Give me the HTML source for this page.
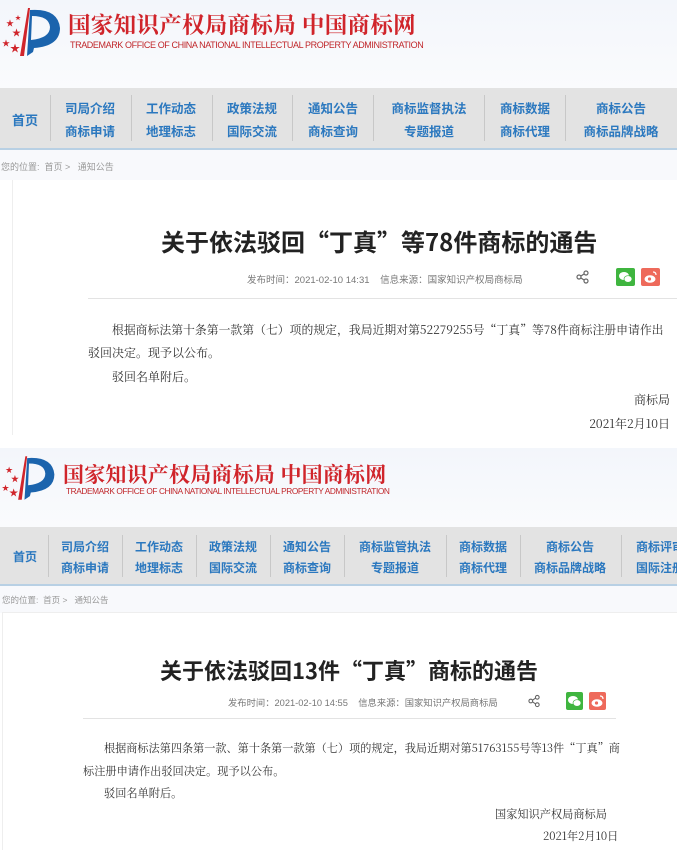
<!DOCTYPE html>
<html><head><meta charset="utf-8"><style>
*{margin:0;padding:0;box-sizing:border-box}
body{width:677px;height:850px;overflow:hidden;background:#fff;position:relative;font-family:"Liberation Sans","Noto Sans CJK SC",sans-serif}
.a{position:absolute;white-space:nowrap}
.hdr{background:linear-gradient(#f3f6fb,#fafbfd);}
.nav{background:#e3e3e3;border-bottom:2px solid #b8d0e4}
.n{position:absolute;color:#2b78bf;font-weight:bold;text-align:center;transform:translateX(-50%);white-space:nowrap}
.sep{position:absolute;width:1px;background:#c8c8c8}
.logo{font-family:"Noto Serif CJK SC","Liberation Serif",serif;color:#d0252b;font-weight:bold}
.en{color:#c0262a;font-size:9px;letter-spacing:-0.4px;transform-origin:left}
.crumb{color:#999;font-size:9px}
.title{font-weight:bold;color:#222;font-family:"Noto Sans CJK SC",sans-serif}
.meta{color:#777;font-size:9.5px;transform-origin:left}
.body{font-family:"Noto Serif CJK SC","Liberation Serif",serif;color:#333;font-size:12px}
.wx{position:absolute;background:#3fb53f;border-radius:2px}
.wb{position:absolute;background:#ee6a5b;border-radius:2px}
</style></head><body>

<!-- PANEL 1 -->
<div class="a hdr" style="left:0;top:0;width:677px;height:88px"></div>
<svg class="a" style="left:0;top:6px" width="64" height="52" viewBox="0 0 64 52">
<polygon points="28,2 30,2 24,50 20,50" fill="#d0252b"/>
<path d="M30 4 Q58 2 60 22 Q60 40 34 42 L33 46 L27 50 L30 4 Z M32 10 L31 34 Q50 32 50 21 Q49 10 32 10 Z" fill="#1b64ad"/>
<text x="6" y="20" fill="#d0252b" font-size="8">★</text><text x="12" y="30" fill="#d0252b" font-size="9">★</text>
<text x="2" y="40" fill="#d0252b" font-size="8">★</text><text x="10" y="46" fill="#d0252b" font-size="10">★</text>
<text x="15" y="14" fill="#d0252b" font-size="6">★</text>
</svg>
<div class="a logo" style="left:68px;top:8px;font-size:22.5px;letter-spacing:0.3px">国家知识产权局商标局 中国商标网</div>
<div class="a en" style="left:70px;top:40px">TRADEMARK OFFICE OF CHINA NATIONAL INTELLECTUAL PROPERTY ADMINISTRATION</div>

<div class="a nav" style="left:0;top:88px;width:677px;height:62px"></div>
<div class="n" style="left:25px;top:110px;font-size:13px">首页</div>
<div class="sep" style="left:50px;top:95px;height:46px"></div>
<div class="sep" style="left:131px;top:95px;height:46px"></div>
<div class="sep" style="left:212px;top:95px;height:46px"></div>
<div class="sep" style="left:292px;top:95px;height:46px"></div>
<div class="sep" style="left:373px;top:95px;height:46px"></div>
<div class="sep" style="left:484px;top:95px;height:46px"></div>
<div class="sep" style="left:565px;top:95px;height:46px"></div>
<div class="n" style="left:90px;top:98px;font-size:12.5px">司局介绍</div><div class="n" style="left:90px;top:121px;font-size:12.5px">商标申请</div>
<div class="n" style="left:171px;top:98px;font-size:12.5px">工作动态</div><div class="n" style="left:171px;top:121px;font-size:12.5px">地理标志</div>
<div class="n" style="left:252px;top:98px;font-size:12.5px">政策法规</div><div class="n" style="left:252px;top:121px;font-size:12.5px">国际交流</div>
<div class="n" style="left:333px;top:98px;font-size:12.5px">通知公告</div><div class="n" style="left:333px;top:121px;font-size:12.5px">商标查询</div>
<div class="n" style="left:429px;top:98px;font-size:12.5px">商标监督执法</div><div class="n" style="left:429px;top:121px;font-size:12.5px">专题报道</div>
<div class="n" style="left:525px;top:98px;font-size:12.5px">商标数据</div><div class="n" style="left:525px;top:121px;font-size:12.5px">商标代理</div>
<div class="n" style="left:621px;top:98px;font-size:12.5px">商标公告</div><div class="n" style="left:621px;top:121px;font-size:12.5px">商标品牌战略</div>

<div class="a" style="left:0;top:150px;width:677px;height:30px;background:#f8f9fc"></div>
<div class="a crumb" style="left:1px;top:160px">您的位置:&nbsp; 首页 &gt;&nbsp;&nbsp; 通知公告</div>
<div class="a" style="left:12px;top:180px;width:1px;height:255px;background:#eee"></div>

<div class="a title" style="left:161px;top:225px;font-size:24px;line-height:32px">关于依法驳回“丁真”等78件商标的通告</div>
<div class="a meta" style="left:247px;top:272px">发布时间：2021-02-10 14:31&nbsp;&nbsp;&nbsp; 信息来源：国家知识产权局商标局</div>
<svg class="a" style="left:576px;top:270px" width="14" height="14" viewBox="0 0 14 14" fill="none" stroke="#666" stroke-width="1.2"><circle cx="10" cy="3" r="2"/><circle cx="3" cy="7" r="2"/><circle cx="10" cy="11" r="2"/><path d="M5 6L8 4M5 8L8 10"/></svg>
<div class="wx" style="left:616px;top:268px;width:19px;height:18px"></div>
<svg class="a" style="left:618px;top:270px" width="15" height="14" viewBox="0 0 15 14"><ellipse cx="6" cy="6" rx="5" ry="4" fill="#fff"/><ellipse cx="10" cy="9" rx="4" ry="3.3" fill="#fff" stroke="#3fb53f" stroke-width="0.7"/></svg>
<div class="wb" style="left:641px;top:268px;width:19px;height:18px"></div>
<svg class="a" style="left:643px;top:270px" width="15" height="14" viewBox="0 0 15 14"><ellipse cx="7" cy="9" rx="5.5" ry="3.8" fill="#fff"/><circle cx="6.5" cy="9" r="1.6" fill="#ee6a5b"/><path d="M10 2 Q13 2 13 5" stroke="#fff" fill="none" stroke-width="1.2"/></svg>
<div class="a" style="left:88px;top:298px;width:589px;height:1px;background:#e3e3e3"></div>
<div class="a body" style="left:112px;top:321px;font-size:11.85px">根据商标法第十条第一款第（七）项的规定，我局近期对第52279255号“丁真”等78件商标注册申请作出</div>
<div class="a body" style="left:88px;top:344px">驳回决定。现予以公布。</div>
<div class="a body" style="left:112px;top:368px">驳回名单附后。</div>
<div class="a body" style="right:7px;top:391px">商标局</div>
<div class="a body" style="right:7px;top:415px">2021年2月10日</div>

<!-- PANEL 2 -->
<div class="a hdr" style="left:0;top:448px;width:677px;height:79px"></div>
<svg class="a" style="left:0;top:454px" width="58" height="48" viewBox="0 0 64 52">
<polygon points="28,2 30,2 24,50 20,50" fill="#d0252b"/>
<path d="M30 4 Q58 2 60 22 Q60 40 34 42 L33 46 L27 50 L30 4 Z M32 10 L31 34 Q50 32 50 21 Q49 10 32 10 Z" fill="#1b64ad"/>
<text x="6" y="20" fill="#d0252b" font-size="8">★</text><text x="12" y="30" fill="#d0252b" font-size="9">★</text>
<text x="2" y="40" fill="#d0252b" font-size="8">★</text><text x="10" y="46" fill="#d0252b" font-size="10">★</text>
</svg>
<div class="a logo" style="left:63px;top:459px;font-size:21px;letter-spacing:0.2px">国家知识产权局商标局 中国商标网</div>
<div class="a en" style="left:66px;top:486px;font-size:8.3px">TRADEMARK OFFICE OF CHINA NATIONAL INTELLECTUAL PROPERTY ADMINISTRATION</div>

<div class="a nav" style="left:0;top:527px;width:677px;height:59px"></div>
<div class="n" style="left:25px;top:548px;font-size:12px">首页</div>
<div class="sep" style="left:48px;top:535px;height:42px"></div>
<div class="sep" style="left:122px;top:535px;height:42px"></div>
<div class="sep" style="left:196px;top:535px;height:42px"></div>
<div class="sep" style="left:270px;top:535px;height:42px"></div>
<div class="sep" style="left:344px;top:535px;height:42px"></div>
<div class="sep" style="left:446px;top:535px;height:42px"></div>
<div class="sep" style="left:520px;top:535px;height:42px"></div>
<div class="sep" style="left:621px;top:535px;height:42px"></div>
<div class="n" style="left:85px;top:538px;font-size:12px">司局介绍</div><div class="n" style="left:85px;top:559px;font-size:12px">商标申请</div>
<div class="n" style="left:159px;top:538px;font-size:12px">工作动态</div><div class="n" style="left:159px;top:559px;font-size:12px">地理标志</div>
<div class="n" style="left:233px;top:538px;font-size:12px">政策法规</div><div class="n" style="left:233px;top:559px;font-size:12px">国际交流</div>
<div class="n" style="left:307px;top:538px;font-size:12px">通知公告</div><div class="n" style="left:307px;top:559px;font-size:12px">商标查询</div>
<div class="n" style="left:395px;top:538px;font-size:12px">商标监管执法</div><div class="n" style="left:395px;top:559px;font-size:12px">专题报道</div>
<div class="n" style="left:483px;top:538px;font-size:12px">商标数据</div><div class="n" style="left:483px;top:559px;font-size:12px">商标代理</div>
<div class="n" style="left:570px;top:538px;font-size:12px">商标公告</div><div class="n" style="left:570px;top:559px;font-size:12px">商标品牌战略</div>
<div class="a" style="left:636px;top:538px;font-size:12px;color:#2b78bf;font-weight:bold">商标评审</div><div class="a" style="left:636px;top:559px;font-size:12px;color:#2b78bf;font-weight:bold">国际注册</div>

<div class="a" style="left:0;top:586px;width:677px;height:27px;background:#f8f9fc"></div>
<div class="a crumb" style="left:2px;top:594px;font-size:8.5px">您的位置:&nbsp; 首页 &gt;&nbsp;&nbsp; 通知公告</div>
<div class="a" style="left:2px;top:612px;width:675px;height:1px;background:#eee"></div>
<div class="a" style="left:2px;top:612px;width:1px;height:238px;background:#eee"></div>

<div class="a title" style="left:160px;top:655px;font-size:22px;line-height:30px">关于依法驳回13件“丁真”商标的通告</div>
<div class="a meta" style="left:228px;top:695px;font-size:9.3px">发布时间：2021-02-10 14:55&nbsp;&nbsp;&nbsp; 信息来源：国家知识产权局商标局</div>
<svg class="a" style="left:528px;top:694px" width="13" height="14" viewBox="0 0 14 14" fill="none" stroke="#666" stroke-width="1.2"><circle cx="10" cy="3" r="2"/><circle cx="3" cy="7" r="2"/><circle cx="10" cy="11" r="2"/><path d="M5 6L8 4M5 8L8 10"/></svg>
<div class="wx" style="left:566px;top:692px;width:17px;height:18px"></div>
<svg class="a" style="left:567px;top:694px" width="15" height="14" viewBox="0 0 15 14"><ellipse cx="6" cy="6" rx="5" ry="4" fill="#fff"/><ellipse cx="10" cy="9" rx="4" ry="3.3" fill="#fff" stroke="#3fb53f" stroke-width="0.7"/></svg>
<div class="wb" style="left:589px;top:692px;width:17px;height:18px"></div>
<svg class="a" style="left:590px;top:694px" width="15" height="14" viewBox="0 0 15 14"><ellipse cx="7" cy="9" rx="5.5" ry="3.8" fill="#fff"/><circle cx="6.5" cy="9" r="1.6" fill="#ee6a5b"/><path d="M10 2 Q13 2 13 5" stroke="#fff" fill="none" stroke-width="1.2"/></svg>
<div class="a" style="left:83px;top:718px;width:533px;height:1px;background:#e3e3e3"></div>
<div class="a body" style="left:104px;top:740px;font-size:11.15px">根据商标法第四条第一款、第十条第一款第（七）项的规定，我局近期对第51763155号等13件“丁真”商</div>
<div class="a body" style="left:83px;top:763px;font-size:11.2px">标注册申请作出驳回决定。现予以公布。</div>
<div class="a body" style="left:104px;top:785px;font-size:11.2px">驳回名单附后。</div>
<div class="a body" style="left:495px;top:806px;font-size:11.2px">国家知识产权局商标局</div>
<div class="a body" style="left:543px;top:828px;font-size:11.2px">2021年2月10日</div>
</body></html>
